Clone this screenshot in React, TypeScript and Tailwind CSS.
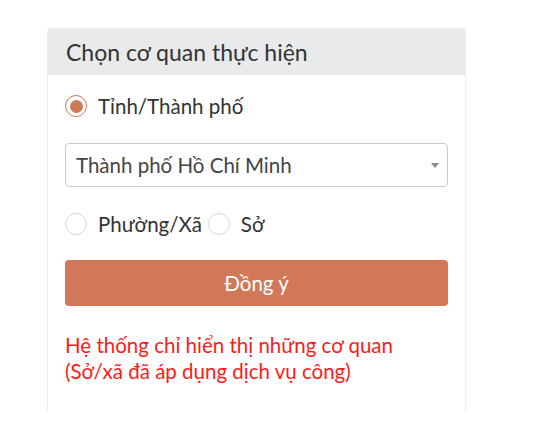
export default function App() {
  const font = { fontFamily: 'Lato, "Noto Sans", sans-serif' };

  return (
    <div className="min-h-screen bg-white pt-[28px] pl-[47px]" style={font}>
      <div className="w-[419px] rounded-t border border-b-0 border-[#ececec]">
        {/* Header */}
        <div className="flex h-[46px] items-center bg-[#e9eaec] px-[18px] text-[23px] text-[#333]">
          Chọn cơ quan thực hiện
        </div>

        <div className="px-[17px] pt-[20px] pb-[27px]">
          {/* Tỉnh/Thành phố */}
          <label className="flex h-[22px] items-center gap-[11px] text-[20.5px] text-[#333]">
            <span className="flex h-[22px] w-[22px] items-center justify-center rounded-full border border-[#d07858] bg-white">
              <span className="h-[13px] w-[13px] rounded-full bg-[#d07858]" />
            </span>
            Tỉnh/Thành phố
          </label>

          {/* Select */}
          <div className="relative mt-[26px] flex h-[44px] items-center rounded border border-[#ccc] pl-[10px] text-[20.5px] text-[#444]">
            Thành phố Hồ Chí Minh
            <span className="absolute right-[8px] top-[19px] h-0 w-0 border-x-[4px] border-t-[5px] border-x-transparent border-t-[#888]" />
          </div>

          {/* Phường/Xã, Sở */}
          <div className="mt-[26px] flex h-[22px] items-center text-[20.5px] text-[#333]">
            <label className="flex items-center gap-[11px]">
              <span className="h-[22px] w-[22px] rounded-full border border-[#d6d6d6] bg-white" />
              Phường/Xã
            </label>
            <label className="ml-[6px] flex items-center gap-[11px]">
              <span className="h-[22px] w-[22px] rounded-full border border-[#d6d6d6] bg-white" />
              Sở
            </label>
          </div>

          {/* Button */}
          <button className="mt-[25px] flex h-[46px] w-full items-center justify-center rounded bg-[#d07858] text-[20.5px] text-white">
            Đồng ý
          </button>

          {/* Note */}
          <p className="mt-[26px] text-[20.5px] leading-[26px] text-[#ff1a1a]">
            Hệ thống chỉ hiển thị những cơ quan
            <br />
            (Sở/xã đã áp dụng dịch vụ công)
          </p>
        </div>
      </div>
    </div>
  );
}
